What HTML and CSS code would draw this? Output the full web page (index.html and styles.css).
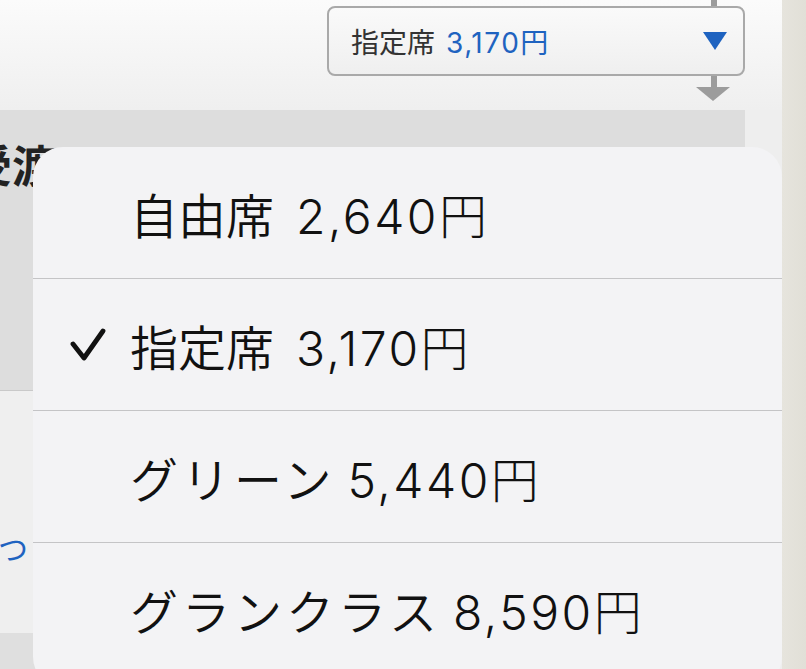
FILE: index.html
```html
<!DOCTYPE html>
<html lang="ja">
  <head>
    <meta charset="UTF-8" />
    <meta name="viewport" content="width=device-width, initial-scale=1.0" />
    <title>座席選択</title>
    <link rel="stylesheet" href="styles.css">
  </head>
  <body>
    <div class="page">
      <main class="content">
        <div class="top">
          <div class="stem stem-top"></div>
          <div class="fare-select">
            <span class="fare-label">指定席</span>
            <span class="fare-price">3,170円</span>
            <span class="fare-caret"></span>
          </div>
          <div class="stem stem-bottom"></div>
          <div class="stem-arrow"></div>
        </div>

        <section class="band">
          <h2 class="band-title">受渡</h2>
        </section>

        <section class="notice">
          <a class="notice-link">つ</a>
        </section>

        <div class="foot"></div>
      </main>
      <aside class="edge"></aside>
    </div>

    <ul class="menu">
      <li class="menu-item">
        <span class="check-slot"></span>
        <span class="seat">自由席</span> <span class="price">2,640円</span>
      </li>
      <li class="menu-item">
        <span class="check-slot">
          <svg width="36" height="34" viewBox="0 0 36 34">
            <polyline points="3,16 14,30 33,3" fill="none" stroke="#111" stroke-width="4.8" stroke-linecap="round" stroke-linejoin="round" />
          </svg>
        </span>
        <span class="seat">指定席</span> <span class="price">3,170円</span>
      </li>
      <li class="menu-item">
        <span class="check-slot"></span>
        <span class="seat kana">グリーン</span> <span class="price">5,440円</span>
      </li>
      <li class="menu-item">
        <span class="check-slot"></span>
        <span class="seat kana">グランクラス</span> <span class="price">8,590円</span>
      </li>
    </ul>
  </body>
</html>
```

FILE: styles.css
```css
body {
  margin: 0;
  padding: 0;
  font-family: Inter, "Noto Sans CJK JP", sans-serif;
  background: #eeeeee;
  height: 669px;
  overflow: hidden;
}

.page {
  display: flex;
  height: 669px;
}

.content {
  width: 782px;
  display: flex;
  flex-direction: column;
  background: #eeeeee;
}

.edge {
  flex: 1;
  background: linear-gradient(90deg, #e6e4dd, #e1dfd7);
}

/* top area with the fare picker */
.top {
  height: 110px;
  box-sizing: border-box;
  padding-left: 327px;
  display: flex;
  flex-direction: column;
  background: linear-gradient(180deg, #fbfbfb, #efefef);
}

.stem {
  width: 6px;
  margin-left: 384px;
  background: #9c9c9c;
}

.stem-top {
  height: 6px;
}

.stem-bottom {
  height: 11px;
}

.stem-arrow {
  width: 0;
  height: 0;
  margin-left: 369px;
  border-left: 17px solid transparent;
  border-right: 17px solid transparent;
  border-top: 14px solid #9c9c9c;
}

.fare-select {
  width: 418px;
  height: 70px;
  box-sizing: border-box;
  border: 2px solid #a9a9a9;
  border-radius: 8px;
  background: linear-gradient(180deg, #fafafa, #efefef);
  display: flex;
  align-items: center;
  padding: 0 16px 0 22px;
  font-size: 28px;
}

.fare-label {
  color: #333;
  margin-right: 11px;
}

.fare-price {
  color: #1f63c0;
  letter-spacing: 1.5px;
}

.fare-caret {
  margin-left: auto;
  width: 0;
  height: 0;
  border-left: 12px solid transparent;
  border-right: 12px solid transparent;
  border-top: 18px solid #1f63c0;
}

/* page content under the popup */
.band {
  width: 745px;
  height: 280px;
  background: #dddddd;
  overflow: hidden;
  border-bottom: 1px solid #c9c9c9;
}

.band-title {
  margin: 0;
  padding-top: 35px;
  margin-left: -32px;
  font-size: 44px;
  line-height: 1;
  font-weight: bold;
  color: #222;
}

.notice {
  height: 242px;
  width: 745px;
  background: #efefef;
  overflow: hidden;
  display: flex;
  align-items: center;
}

.notice-link {
  margin-left: -2px;
  margin-top: 70px;
  font-size: 30px;
  color: #1f63c0;
}

.foot {
  flex: 1;
  width: 745px;
  background: #dfdfdf;
}

/* action sheet */
.menu {
  position: absolute;
  left: 33px;
  top: 147px;
  width: 749px;
  height: 540px;
  margin: 0;
  padding: 0;
  list-style: none;
  background: #f3f3f5;
  border-radius: 30px;
  overflow: hidden;
}

.menu-item {
  height: 131px;
  display: flex;
  align-items: center;
  padding-left: 37px;
  color: #111;
  font-size: 48px;
  font-weight: 350;
  white-space: pre;
}

.menu-item + .menu-item {
  border-top: 1px solid #c4c4c6;
}

.check-slot {
  width: 36px;
  height: 34px;
  margin-right: 24px;
  display: flex;
}

.kana {
  letter-spacing: 4px;
}

.price {
  margin-left: 22px;
  letter-spacing: 2.5px;
  font-weight: 300;
}

.kana + .price {
  margin-left: 12px;
}
```
